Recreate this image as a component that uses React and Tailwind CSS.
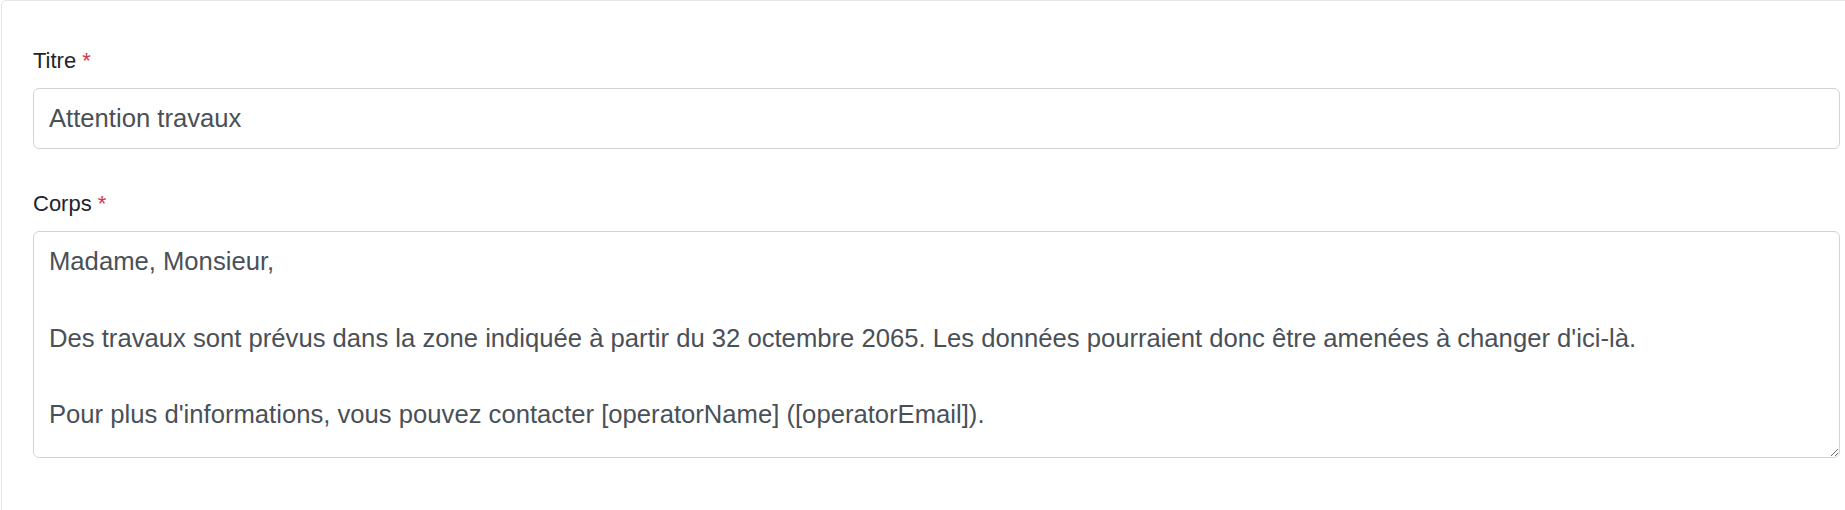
export default function App() {
  const body =
    "Madame, Monsieur,\n\nDes travaux sont prévus dans la zone indiquée à partir du 32 octembre 2065. Les données pourraient donc être amenées à changer d'ici-là.\n\nPour plus d'informations, vous pouvez contacter [operatorName] ([operatorEmail]).";
  return (
    <div
      className="w-full h-[510px] overflow-hidden bg-white"
      style={{ fontFamily: '"Liberation Sans", Arial, sans-serif' }}
    >
      <div className="ml-[1px] w-[1871px] h-[540px] border border-[#e6e6e6] rounded-[5px] bg-white pt-[45px] px-[31px]">
        <div className="mb-[40px]">
          <label className="block text-[22px] leading-[30px] text-[#212529] mb-[12px]">
            Titre <span className="text-[#dc3545]">*</span>
          </label>
          <input
            type="text"
            defaultValue="Attention travaux"
            className="block w-full h-[61px] border border-[#ced4da] rounded-[6px] px-[15px] text-[25.65px] text-[#495057] bg-white outline-none"
          />
        </div>
        <div>
          <label className="block text-[22px] leading-[30px] text-[#212529] mb-[12px]">
            Corps <span className="text-[#dc3545]">*</span>
          </label>
          <textarea
            defaultValue={body}
            className="block w-full h-[227px] border border-[#ced4da] rounded-[6px] px-[15px] py-[10px] text-[25.65px] leading-[38.25px] text-[#495057] bg-white outline-none"
          />
        </div>
      </div>
    </div>
  );
}
